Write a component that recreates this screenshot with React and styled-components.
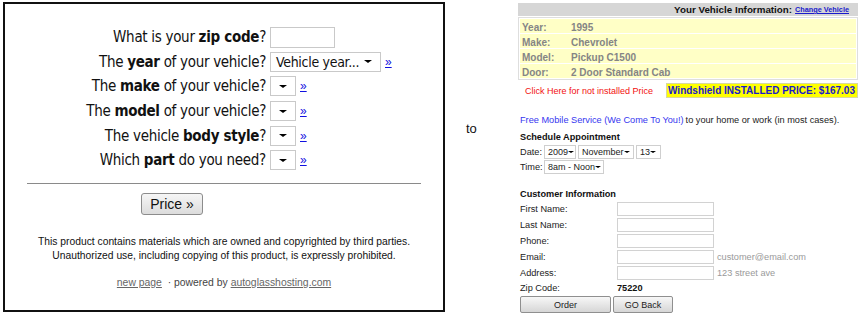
import React from 'react';
import styled, { createGlobalStyle } from 'styled-components';

const Global = createGlobalStyle`
  html, body { margin: 0; padding: 0; background: #fff; }
  body { font-family: "Liberation Sans", Arial, sans-serif; color: #111; }
`;

const Page = styled.div`
  display: flex;
  align-items: flex-start;
  width: 860px;
  height: 314px;
  overflow: hidden;
`;

/* ---------- left: quote form ---------- */

const QuoteBox = styled.div`
  margin: 2px 0 0 3px;
  width: 438px;
  height: 306px;
  border: 2px solid #111;
  display: flex;
  flex-direction: column;
  align-items: center;
`;

const QuestionGrid = styled.div`
  align-self: stretch;
  display: grid;
  grid-template-columns: 261px 1fr;
  grid-auto-rows: 24.6px;
  column-gap: 4px;
  align-items: center;
  padding-top: 21px;
`;

const Question = styled.div`
  text-align: right;
  white-space: nowrap;
  font-family: Tahoma, "DejaVu Sans Condensed", "DejaVu Sans", sans-serif;
  font-size: 15px;
  letter-spacing: -0.3px;
  color: #111;
  b { font-weight: bold; }
`;

const Control = styled.div`
  display: flex;
  align-items: center;
  gap: 4px;
`;

const TextBox = styled.div`
  box-sizing: border-box;
  width: 65px;
  height: 21px;
  border: 1px solid #c9c9c9;
  background: #fff;
`;

const DropDown = styled.div`
  box-sizing: border-box;
  width: ${p => (p.$wide ? '111px' : '26px')};
  height: 20px;
  border: 1px solid #c9c9c9;
  display: flex;
  align-items: center;
  padding: 0 8px 0 5px;
  white-space: nowrap;
  overflow: hidden;
  font-family: Tahoma, "DejaVu Sans Condensed", "DejaVu Sans", sans-serif;
  font-size: 14px;
  letter-spacing: -0.3px;
  color: #111;
`;

const Caret = styled.span`
  flex: none;
  width: 0;
  height: 0;
  border-left: ${p => p.$size || 4}px solid transparent;
  border-right: ${p => p.$size || 4}px solid transparent;
  border-top: ${p => (p.$size || 4) - 0.5}px solid #000;
  margin-left: auto;
`;

const Next = styled.a`
  color: #1010e0;
  font-size: 12px;
  text-decoration: underline;
`;

const Divider = styled.div`
  width: 394px;
  height: 0;
  border-top: 1px solid #8a8a8a;
  margin-top: 10px;
`;

const PriceButton = styled.button`
  align-self: flex-start;
  margin: 9px 0 0 136px;
  width: 62px;
  height: 22px;
  padding: 0;
  border: 1px solid #8c8c8c;
  border-radius: 3px;
  background: linear-gradient(#f6f6f6, #dcdcdc);
  font-family: "Liberation Sans", Arial, sans-serif;
  font-size: 14px;
  color: #111;
`;

const Notice = styled.p`
  margin: 20px 0 0;
  text-align: center;
  font-size: 10.3px;
  line-height: 14px;
  color: #111;
`;

const Footer = styled.div`
  margin-top: 14px;
  font-size: 10.4px;
  color: #444;
  a { color: #666; text-decoration: underline; }
`;

/* ---------- middle ---------- */

const Between = styled.div`
  width: 52px;
  padding: 121px 0 0 21px;
  font-size: 13px;
  color: #111;
`;

/* ---------- right: order form ---------- */

const OrderPanel = styled.div`
  width: 340px;
  display: flex;
  flex-direction: column;
  font-size: 9.2px;
  color: #222;
`;

const InfoHeader = styled.div`
  margin-top: 3px;
  height: 13px;
  background: #d6d6d6;
  display: flex;
  align-items: center;
  justify-content: flex-end;
  padding-right: 9px;
  font-size: 9.8px;
  font-weight: bold;
  color: #111;
  a {
    margin-left: 3px;
    font-size: 7.3px;
    color: #1a1acc;
    text-decoration: underline;
  }
`;

const InfoTable = styled.div`
  margin-top: 1px;
  border: 1px solid #dedede;
  padding: 1px;
  display: grid;
  gap: 1px;
`;

const InfoRow = styled.div`
  box-sizing: border-box;
  height: 14px;
  display: grid;
  grid-template-columns: 49px 1fr;
  align-items: center;
  padding: 2px 0 0 2px;
  background: #ffffc6;
  font-size: 10px;
  font-weight: bold;
  color: #858585;
`;

const PriceLine = styled.div`
  margin-top: 3px;
  height: 15px;
  display: flex;
  align-items: center;
  justify-content: space-between;
`;

const NotInstalled = styled.a`
  padding-left: 7px;
  font-size: 9px;
  color: #f21010;
`;

const PriceBox = styled.div`
  box-sizing: border-box;
  width: 192px;
  height: 15px;
  background: #ffff00;
  border: 1px solid #d8d8a0;
  padding-left: 1px;
  display: flex;
  align-items: center;
  white-space: nowrap;
  font-size: 10px;
  font-weight: bold;
  color: #1a1acc;
`;

const Line = styled.div`
  margin-top: ${p => p.$gap || 0}px;
  height: ${p => p.$h || 15}px;
  display: flex;
  align-items: center;
  padding-left: 2px;
  white-space: nowrap;
  font-weight: ${p => (p.$bold ? 'bold' : 'normal')};
  color: ${p => (p.$bold ? '#111' : '#222')};
`;

const ServiceLink = styled.a`
  color: #3636f0;
  margin-right: 2px;
`;

const FieldLabel = styled.span`
  width: ${p => p.$w}px;
  flex: none;
`;

const ZipValue = styled.span`
  font-weight: bold;
  color: #111;
`;

const MiniSelect = styled.div`
  box-sizing: border-box;
  width: ${p => p.$w}px;
  height: 14px;
  margin-right: 2px;
  border: 1px solid #cfcfcf;
  display: flex;
  align-items: center;
  padding: 0 4px 0 3px;
  font-size: 9px;
  color: #222;
`;

const Input = styled.div`
  box-sizing: border-box;
  width: 97px;
  height: 14px;
  border: 1px solid #d2d2d2;
  background: #fff;
`;

const Hint = styled.span`
  margin-left: 3px;
  color: #9a9a9a;
`;

const ButtonRow = styled.div`
  margin-top: 1px;
  padding-left: 2px;
  display: flex;
  gap: 2px;
`;

const FormButton = styled.button`
  width: ${p => p.$w}px;
  height: 17px;
  padding: 0;
  border: 1px solid #8f8f8f;
  border-radius: 2px;
  background: linear-gradient(#f7f7f7, #d6d6d6);
  font-family: "Liberation Sans", Arial, sans-serif;
  font-size: 9px;
  color: #222;
`;

const questions = [
  { pre: 'What is your ', bold: 'zip code', post: '?', kind: 'text' },
  { pre: 'The ', bold: 'year', post: ' of your vehicle?', kind: 'wide' },
  { pre: 'The ', bold: 'make', post: ' of your vehicle?', kind: 'select' },
  { pre: 'The ', bold: 'model', post: ' of your vehicle?', kind: 'select' },
  { pre: 'The vehicle ', bold: 'body style', post: '?', kind: 'select' },
  { pre: 'Which ', bold: 'part', post: ' do you need?', kind: 'select' },
];

const vehicle = [
  ['Year:', '1995'],
  ['Make:', 'Chevrolet'],
  ['Model:', 'Pickup C1500'],
  ['Door:', '2 Door Standard Cab'],
];

const customer = [
  ['First Name:', ''],
  ['Last Name:', ''],
  ['Phone:', ''],
  ['Email:', 'customer@email.com'],
  ['Address:', '123 street ave'],
];

const App = () => (
  <Page>
    <Global />
    <QuoteBox>
      <QuestionGrid>
        {questions.map(q => (
          <React.Fragment key={q.bold}>
            <Question>
              {q.pre}<b>{q.bold}</b>{q.post}
            </Question>
            <Control>
              {q.kind === 'text' && <TextBox />}
              {q.kind === 'wide' && (
                <DropDown $wide>Vehicle year...<Caret /></DropDown>
              )}
              {q.kind === 'select' && <DropDown><Caret /></DropDown>}
              {q.kind !== 'text' && <Next href="#">»</Next>}
            </Control>
          </React.Fragment>
        ))}
      </QuestionGrid>
      <Divider />
      <PriceButton>Price »</PriceButton>
      <Notice>
        This product contains materials which are owned and copyrighted by third parties.
        <br />
        Unauthorized use, including copying of this product, is expressly prohibited.
      </Notice>
      <Footer>
        <a href="#">new page</a>&nbsp; · powered by <a href="#">autoglasshosting.com</a>
      </Footer>
    </QuoteBox>

    <Between>to</Between>

    <OrderPanel>
      <InfoHeader>
        Your Vehicle Information: <a href="#">Change Vehicle</a>
      </InfoHeader>
      <InfoTable>
        {vehicle.map(([k, v]) => (
          <InfoRow key={k}>
            <span>{k}</span>
            <span>{v}</span>
          </InfoRow>
        ))}
      </InfoTable>
      <PriceLine>
        <NotInstalled>Click Here for not installed Price</NotInstalled>
        <PriceBox>Windshield INSTALLED PRICE: $167.03</PriceBox>
      </PriceLine>

      <Line $gap={14}>
        <ServiceLink>Free Mobile Service (We Come To You!)</ServiceLink>
        to your home or work (in most cases).
      </Line>
      <Line $gap={2} $bold>Schedule Appointment</Line>
      <Line>
        <FieldLabel $w={24}>Date:</FieldLabel>
        <MiniSelect $w={32}>2009<Caret $size={3} /></MiniSelect>
        <MiniSelect $w={56}>November<Caret $size={3} /></MiniSelect>
        <MiniSelect $w={25}>13<Caret $size={3} /></MiniSelect>
      </Line>
      <Line>
        <FieldLabel $w={24}>Time:</FieldLabel>
        <MiniSelect $w={60}>8am - Noon<Caret $size={3} /></MiniSelect>
      </Line>

      <Line $gap={12} $bold>Customer Information</Line>
      {customer.map(([k, hint]) => (
        <Line key={k} $h={16}>
          <FieldLabel $w={97}>{k}</FieldLabel>
          <Input />
          {hint && <Hint>{hint}</Hint>}
        </Line>
      ))}
      <Line $h={14}>
        <FieldLabel $w={97}>Zip Code:</FieldLabel>
        <ZipValue>75220</ZipValue>
      </Line>
      <ButtonRow>
        <FormButton $w={91}>Order</FormButton>
        <FormButton $w={60}>GO Back</FormButton>
      </ButtonRow>
    </OrderPanel>
  </Page>
);

export default App;
